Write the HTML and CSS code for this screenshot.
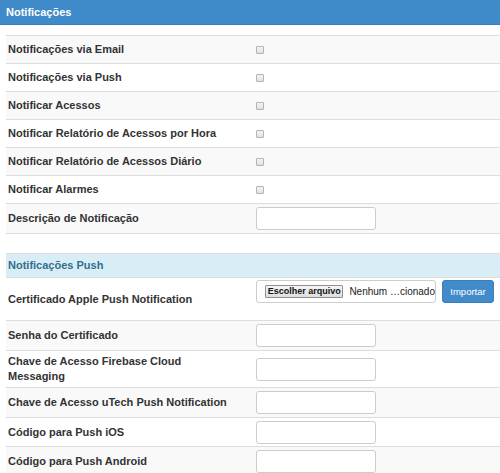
FILE: index.html
```html
<!DOCTYPE html>
<html lang="pt-BR">
<head>
<meta charset="utf-8">
<title>Notificações</title>
<link rel="stylesheet" href="styles.css">
</head>
<body>
<div class="panel-heading">Notificações</div>
<table class="form-table">
  <colgroup><col class="col-lbl"><col class="col-val"></colgroup>
  <tr class="row-check"><td class="lbl">Notificações via Email</td><td class="val"><span class="checkbox"></span></td></tr>
  <tr class="row-check"><td class="lbl">Notificações via Push</td><td class="val"><span class="checkbox"></span></td></tr>
  <tr class="row-check"><td class="lbl">Notificar Acessos</td><td class="val"><span class="checkbox"></span></td></tr>
  <tr class="row-check"><td class="lbl">Notificar Relatório de Acessos por Hora</td><td class="val"><span class="checkbox"></span></td></tr>
  <tr class="row-check"><td class="lbl">Notificar Relatório de Acessos Diário</td><td class="val"><span class="checkbox"></span></td></tr>
  <tr class="row-check"><td class="lbl">Notificar Alarmes</td><td class="val"><span class="checkbox"></span></td></tr>
  <tr class="row-input"><td class="lbl">Descrição de Notificação</td><td class="val"><span class="text-input"></span></td></tr>
  <tr class="row-empty"><td class="lbl"></td><td class="val"></td></tr>
  <tr class="row-section"><td class="section" colspan="2">Notificações Push</td></tr>
  <tr class="row-file"><td class="lbl">Certificado Apple Push Notification</td><td class="val file-cell">
    <div class="file-line">
      <span class="file-box"><span class="file-btn">Escolher arquivo</span><span class="file-name">Nenhum …cionado</span></span>
      <span class="btn-primary">Importar</span>
    </div>
  </td></tr>
  <tr class="row-input"><td class="lbl">Senha do Certificado</td><td class="val"><span class="text-input"></span></td></tr>
  <tr class="row-tall"><td class="lbl">Chave de Acesso Firebase Cloud Messaging</td><td class="val"><span class="text-input"></span></td></tr>
  <tr class="row-input"><td class="lbl">Chave de Acesso uTech Push Notification</td><td class="val"><span class="text-input"></span></td></tr>
  <tr class="row-input2"><td class="lbl">Código para Push iOS</td><td class="val"><span class="text-input"></span></td></tr>
  <tr class="row-input"><td class="lbl">Código para Push Android</td><td class="val"><span class="text-input"></span></td></tr>
</table>
</body>
</html>
```

FILE: styles.css
```css
html, body {
  margin: 0;
  padding: 0;
  background: #ffffff;
  font-family: "Liberation Sans", Arial, sans-serif;
  font-size: 11px;
  color: #333333;
  overflow: hidden;
}

.panel-heading {
  height: 24px;
  line-height: 24px;
  background: #3f8ac9;
  border-bottom: 1px solid #3a7fbb;
  color: #ffffff;
  font-weight: bold;
  padding-left: 6px;
  margin-bottom: 10px;
}

.form-table {
  margin-left: 6px;
  width: 494px;
  border-collapse: separate;
  border-spacing: 0;
  table-layout: fixed;
}

.col-lbl { width: 250px; }
.col-val { width: 244px; }

.form-table td {
  border-top: 1px solid #dddddd;
  padding: 0;
  vertical-align: middle;
  line-height: 15px;
}

.form-table tr:nth-child(odd) td {
  background: #f9f9f9;
}

.form-table td.lbl {
  padding: 0 22px 0 2px;
  font-weight: bold;
}

.row-check td { height: 27px; }
.row-input td { height: 29px; }
.row-input2 td { height: 28px; }
.row-empty td { height: 19px; }
.row-tall td { height: 36px; }
.row-file td { height: 42px; }

.form-table tr.row-section td.section {
  height: 23px;
  background: #d9edf7;
  color: #31708f;
  font-weight: bold;
  padding-left: 2px;
}

.checkbox {
  display: block;
  width: 6px;
  height: 6px;
  border: 1px solid #b4b4b4;
  border-radius: 1px;
  background: linear-gradient(#f4f4f4, #e2e2e2);
}

.text-input {
  display: block;
  box-sizing: border-box;
  width: 120px;
  height: 23px;
  border: 1px solid #cccccc;
  border-radius: 3px;
  background: #ffffff;
}

.form-table tr.row-file td.file-cell {
  vertical-align: top;
  padding-top: 2px;
  height: 40px;
}

.file-line {
  display: flex;
  align-items: center;
  gap: 6px;
}

.file-box {
  box-sizing: border-box;
  width: 180px;
  height: 23px;
  border: 1px solid #cccccc;
  border-radius: 3px;
  background: #ffffff;
  display: flex;
  align-items: center;
  padding-left: 8px;
  gap: 6px;
}

.file-btn {
  box-sizing: border-box;
  width: 80px;
  height: 13px;
  line-height: 11px;
  border: 1px solid #8f8f8f;
  border-radius: 1px;
  background: linear-gradient(#f6f6f6, #dedede);
  color: #111111;
  font-size: 9px;
  font-weight: bold;
  text-align: center;
  white-space: nowrap;
}

.file-name {
  font-size: 10px;
  color: #222222;
  white-space: nowrap;
}

.btn-primary {
  box-sizing: border-box;
  width: 52px;
  height: 23px;
  line-height: 21px;
  border: 1px solid #3a7fbb;
  border-radius: 3px;
  background: #428bca;
  color: #ffffff;
  font-size: 9.5px;
  text-align: center;
}
```
